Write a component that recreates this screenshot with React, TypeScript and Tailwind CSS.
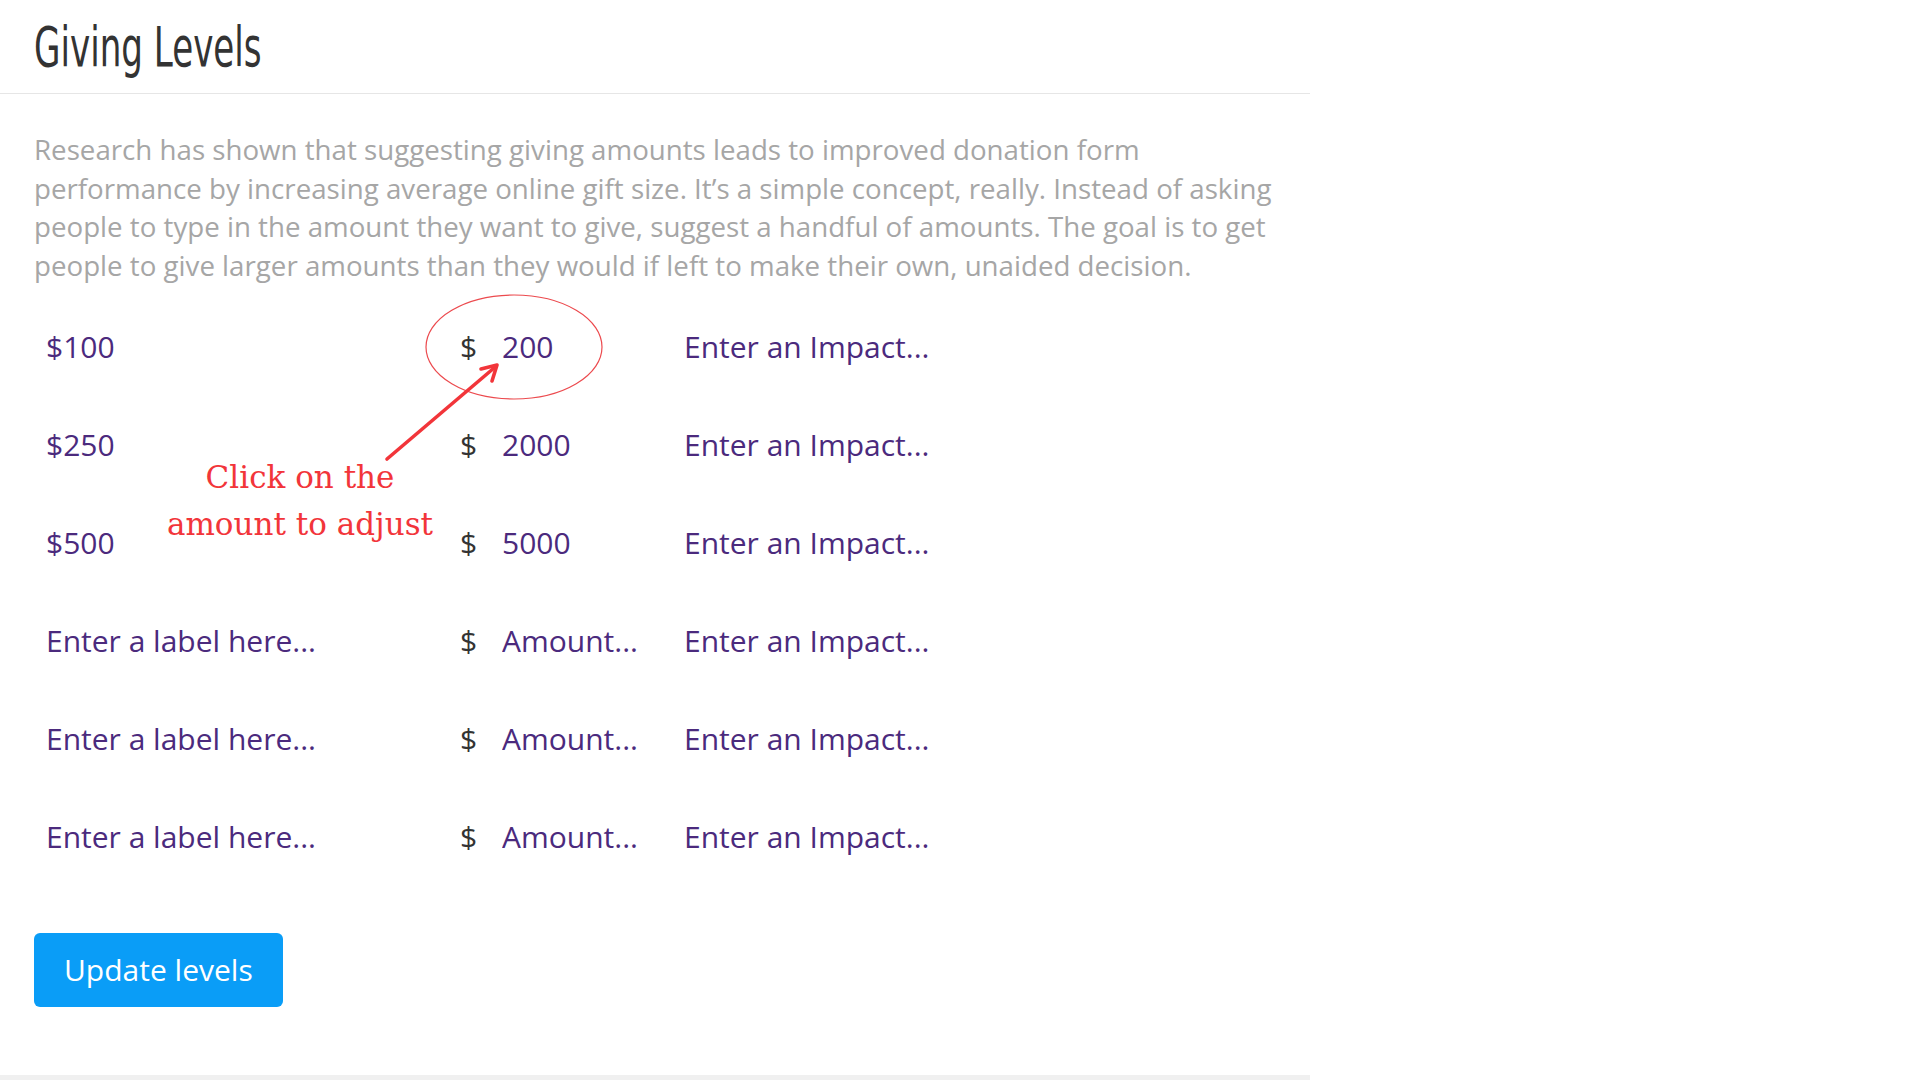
import { useState } from "react";

type Level = { label: string; amount: string; impact: string };

const initialLevels: Level[] = [
  { label: "$100", amount: "200", impact: "" },
  { label: "$250", amount: "2000", impact: "" },
  { label: "$500", amount: "5000", impact: "" },
  { label: "", amount: "", impact: "" },
  { label: "", amount: "", impact: "" },
  { label: "", amount: "", impact: "" },
];

const inputClass =
  "bg-transparent outline-none text-[30px] leading-[40px] text-[#4b2a7d] placeholder:text-[#4b2a7d] placeholder:opacity-100";

function Annotation() {
  return (
    <>
      <svg
        className="pointer-events-none absolute left-0 top-0 h-[1080px] w-[1310px]"
        viewBox="0 0 1310 1080"
        fill="none"
      >
        <ellipse cx="514" cy="347" rx="88" ry="52" stroke="#ec4a4e" strokeWidth="1.2" />
        <path d="M387 459 L494 368" stroke="#f2353a" strokeWidth="3.6" strokeLinecap="round" />
        <path
          d="M481 369 L497 365 L492 381"
          stroke="#f2353a"
          strokeWidth="3.6"
          strokeLinecap="round"
          strokeLinejoin="round"
        />
      </svg>
      <div className="pointer-events-none absolute left-[130px] top-[454px] w-[340px] text-center font-['DejaVu_Serif',serif] text-[31px] leading-[47px] text-[#f2353a]">
        Click on the
        <br />
        amount to adjust
      </div>
    </>
  );
}

export default function App() {
  const [levels, setLevels] = useState<Level[]>(initialLevels);

  const update = (i: number, key: keyof Level, value: string) => {
    setLevels((prev) => prev.map((l, idx) => (idx === i ? { ...l, [key]: value } : l)));
  };

  return (
    <div className="min-h-[1080px] w-[1920px] bg-white font-['Open_Sans',sans-serif]">
      <section className="relative w-[1310px] border-b-[5px] border-[#f0f0f0] pb-[68px]">
        <header className="border-b border-[#e6e6e6] px-[34px] pb-[19px] pt-[20px]">
          <h1 className="inline-block origin-left scale-x-[0.69] font-['Liberation_Sans_Narrow','DejaVu_Sans_Condensed',sans-serif] text-[55px] leading-[54px] text-[#333333]">
            Giving Levels
          </h1>
        </header>

        <div className="px-[34px]">
          <p className="mt-[36px] text-[27.7px] leading-[38.7px] text-[#a6a6a6]">
            Research has shown that suggesting giving amounts leads to improved donation form
            performance by increasing average online gift size. It’s a simple concept, really.
            Instead of asking people to type in the amount they want to give, suggest a handful of
            amounts. The goal is to get people to give larger amounts than they would if left to
            make their own, unaided decision.
          </p>

          <div className="mt-[13px]">
            {levels.map((level, i) => (
              <div key={i} className="flex h-[98px] items-center">
                <input
                  className={`${inputClass} w-[426px] pl-[12px]`}
                  value={level.label}
                  placeholder="Enter a label here..."
                  onChange={(e) => update(i, "label", e.target.value)}
                />
                <span className="w-[42px] text-[30px] leading-[40px] text-[#333333]">$</span>
                <input
                  className={`${inputClass} w-[182px]`}
                  value={level.amount}
                  placeholder="Amount..."
                  onChange={(e) => update(i, "amount", e.target.value)}
                />
                <input
                  className={`${inputClass} w-[400px]`}
                  value={level.impact}
                  placeholder="Enter an Impact..."
                  onChange={(e) => update(i, "impact", e.target.value)}
                />
              </div>
            ))}
          </div>

          <button className="mt-[47px] h-[74px] rounded-[6px] bg-[#0a9df7] px-[30px] text-[30px] leading-[40px] text-white">
            Update levels
          </button>
        </div>

        <Annotation />
      </section>
    </div>
  );
}
